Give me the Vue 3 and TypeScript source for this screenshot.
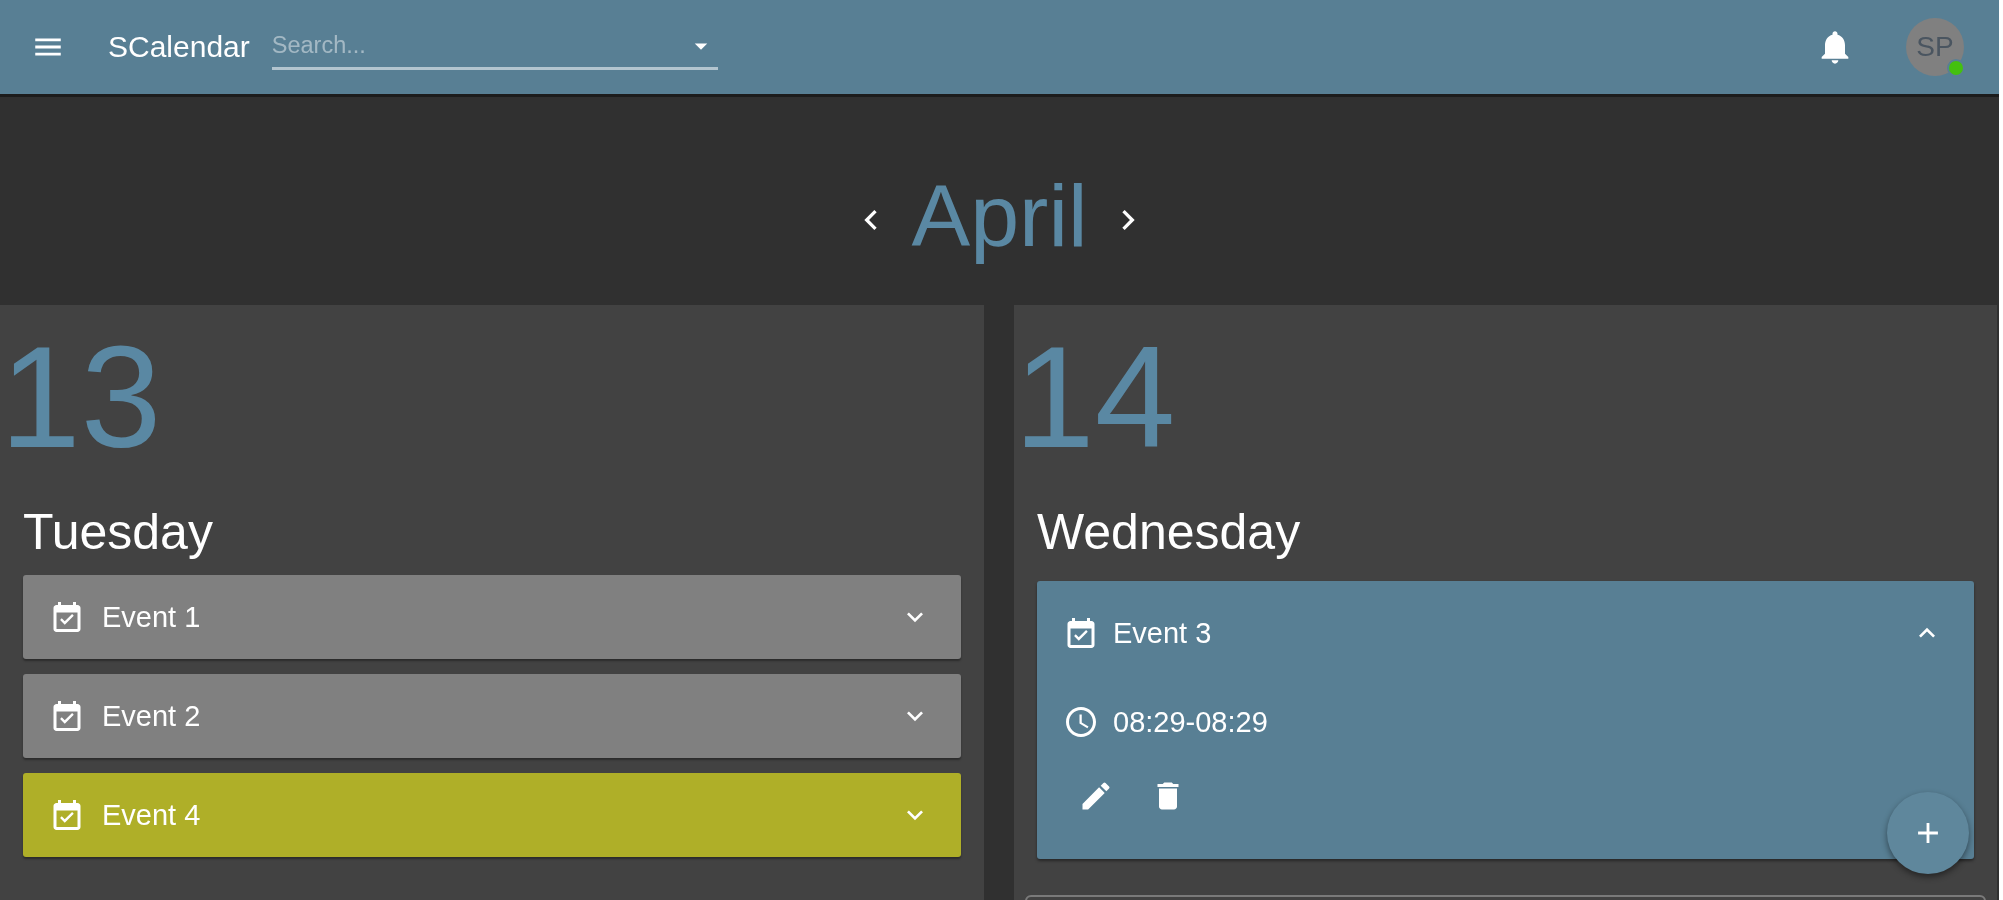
<script setup lang="ts">
interface Item { name: string; tone: string }
const tuesday: Item[] = [
  { name: 'Event 1', tone: 'grey' },
  { name: 'Event 2', tone: 'grey' },
  { name: 'Event 4', tone: 'olive' },
]
const calendar = 'M19 4h-1V2h-2v2H8V2H6v2H5C3.9 4 3 4.9 3 6v14c0 1.1.9 2 2 2h14c1.1 0 2-.9 2-2V6c0-1.1-.9-2-2-2zm0 16H5V9h14v11zm-2.5-8.9-1.1-1.1-4.9 4.9-2-2-1.1 1.1 3.1 3.1z'
const down = 'M7.41 8.59 12 13.17l4.59-4.58L18 10l-6 6-6-6z'
</script>

<template>
  <div class="page">
    <header class="topbar">
      <svg class="menu" viewBox="0 0 24 24"><path d="M3 18h18v-2H3v2zm0-5h18v-2H3v2zm0-7v2h18V6H3z" /></svg>
      <span class="brand">SCalendar</span>
      <div class="search">
        <span class="placeholder">Search...</span>
        <svg class="caret" viewBox="0 0 24 24"><path d="M7 10l5 5 5-5z" /></svg>
      </div>
      <div class="spacer"></div>
      <svg class="bell" viewBox="0 0 24 24"><path d="M12 22c1.1 0 2-.9 2-2h-4c0 1.1.9 2 2 2zm6-6v-5c0-3.07-1.63-5.64-4.5-6.32V4c0-.83-.67-1.5-1.5-1.5s-1.5.67-1.5 1.5v.68C7.64 5.36 6 7.92 6 11v5l-2 2v1h16v-1l-2-2z" /></svg>
      <div class="avatar">SP<span class="dot"></span></div>
    </header>

    <div class="month">
      <svg class="nav" viewBox="0 0 24 24"><path d="M15.41 7.41 14 6l-6 6 6 6 1.41-1.41L10.83 12z" /></svg>
      <span class="month-name">April</span>
      <svg class="nav" viewBox="0 0 24 24"><path d="M8.59 16.59 10 18l6-6-6-6-1.41 1.41L13.17 12z" /></svg>
    </div>

    <main class="days">
      <section class="day">
        <div class="num">13</div>
        <h2 class="weekday">Tuesday</h2>
        <div class="list">
          <div v-for="item in tuesday" :key="item.name" class="row" :class="item.tone">
            <svg class="ico" viewBox="0 0 24 24"><path :d="calendar" /></svg>
            <span>{{ item.name }}</span>
            <svg class="chev" viewBox="0 0 24 24"><path :d="down" /></svg>
          </div>
        </div>
      </section>

      <section class="day second">
        <div class="num">14</div>
        <h2 class="weekday">Wednesday</h2>
        <div class="open">
          <div class="open-head">
            <svg class="ico" viewBox="0 0 24 24"><path :d="calendar" /></svg>
            <span>Event 3</span>
            <svg class="chev" viewBox="0 0 24 24"><path d="M12 8l-6 6 1.41 1.41L12 10.83l4.59 4.58L18 14z" /></svg>
          </div>
          <div class="open-time">
            <svg class="ico" viewBox="0 0 24 24"><path d="M11.99 2C6.47 2 2 6.48 2 12s4.47 10 9.99 10C17.52 22 22 17.52 22 12S17.52 2 11.99 2zM12 20c-4.42 0-8-3.58-8-8s3.58-8 8-8 8 3.58 8 8-3.58 8-8 8zm.5-13H11v6l5.25 3.15.75-1.23-4.5-2.67z" /></svg>
            <span>08:29-08:29</span>
          </div>
          <div class="open-actions">
            <svg class="act" viewBox="0 0 24 24"><path d="M3 17.25V21h3.75L17.81 9.94l-3.75-3.75L3 17.25zM20.71 7.04a1 1 0 0 0 0-1.41l-2.34-2.34a1 1 0 0 0-1.41 0l-1.83 1.83 3.75 3.75 1.83-1.83z" /></svg>
            <svg class="act" viewBox="0 0 24 24"><path d="M6 19c0 1.1.9 2 2 2h8c1.1 0 2-.9 2-2V7H6v12zM19 4h-3.5l-1-1h-5l-1 1H5v2h14V4z" /></svg>
          </div>
        </div>
        <div class="outlined"></div>
      </section>
    </main>

    <button class="fab" type="button" aria-label="Add">
      <svg viewBox="0 0 24 24"><path d="M19 13h-6v6h-2v-6H5v-2h6V5h2v6h6v2z" /></svg>
    </button>
  </div>
</template>

<style>
html, body { margin: 0; background: #fff; overflow: hidden; }
</style>

<style scoped>
.page {
  position: relative;
  width: 1999px;
  height: 900px;
  overflow: hidden;
  background: #303030;
  font-family: "Liberation Sans", Arial, sans-serif;
  color: #fff;
  filter: blur(0.6px);
}
svg { fill: currentColor; display: block; flex: none; }
.topbar {
  height: 94px;
  box-sizing: border-box;
  border-bottom: 0;
  box-shadow: 0 3px 0 #1c1c1c;
  background: #587f94;
  display: flex;
  align-items: center;
  padding-left: 32px;
  position: relative;
}
.menu { width: 34px; height: 34px; margin-left: -1px; }
.brand { font-size: 30px; margin-left: 43px; }
.search {
  width: 446px;
  height: 46px;
  margin-left: 22px;
  box-sizing: border-box;
  border-bottom: 3px solid rgba(255, 255, 255, 0.55);
  display: flex;
  align-items: center;
  justify-content: space-between;
  margin-top: 0;
  padding-right: 2px;
}
.placeholder { font-size: 23.5px; color: rgba(255, 255, 255, 0.45); }
.caret { width: 30px; height: 30px; }
.spacer { flex: 1; }
.bell { width: 40px; height: 40px; margin-right: 51px; }
.avatar {
  position: relative;
  width: 58px;
  height: 58px;
  margin-right: 35px;
  border-radius: 50%;
  background: #808080;
  color: #4a5560;
  font-size: 28px;
  display: flex;
  align-items: center;
  justify-content: center;
}
.dot {
  position: absolute;
  right: -1px;
  bottom: -1px;
  width: 14px;
  height: 14px;
  border-radius: 50%;
  background: #44c00f;
  border: 2px solid #587f94;
}
.month {
  height: 211px;
  box-sizing: border-box;
  padding-top: 33px;
  display: flex;
  align-items: center;
  justify-content: center;
  gap: 20px;
}
.month-name { font-size: 88px; color: #5a88a3; line-height: 1; }
.nav { width: 40px; height: 40px; margin-top: 8px; }
.days {
  display: grid;
  grid-template-columns: 984px 983px;
  column-gap: 30px;
  height: 595px;
}
.day {
  background: #424242;
  padding: 0 23px;
  box-sizing: border-box;
  height: 595px;
  overflow: hidden;
}
.num {
  font-size: 145px;
  line-height: 1;
  color: #5a88a3;
  margin: 20px 0 0 -23px;
  height: 146px;
}
.second .num { margin-left: -23px; }
.weekday {
  font-size: 50px;
  font-weight: 400;
  line-height: 58px;
  margin: 32px 0 0;
  letter-spacing: 0;
}
.list { display: flex; flex-direction: column; gap: 15px; margin-top: 14px; }
.row {
  height: 84px;
  border-radius: 3px;
  box-shadow: 0 2px 2px rgba(0, 0, 0, 0.35);
  display: flex;
  align-items: center;
  padding: 0 30px 0 26px;
  font-size: 29px;
}
.row span { margin-left: 17px; }
.grey { background: #808080; }
.olive { background: #afaf28; }
.ico { width: 36px; height: 36px; }
.chev { width: 32px; height: 32px; margin-left: auto; }
.open {
  margin-top: 20px;
  height: 278px;
  background: #587f94;
  border-radius: 3px;
  box-shadow: 0 2px 3px rgba(0, 0, 0, 0.4);
  box-sizing: border-box;
  padding: 34px 26px 0;
  font-size: 29px;
}
.open-head, .open-time { display: flex; align-items: center; }
.open-head span, .open-time span { margin-left: 14px; }
.open-head { height: 36px; padding-right: 5px; }
.open-time { margin-top: 53px; height: 36px; }
.open-actions { display: flex; gap: 36px; margin-top: 38px; padding-left: 15px; }
.act { width: 36px; height: 36px; }
.second { padding: 0 23px; }
.outlined {
  margin: 36px -12px 0;
  height: 60px;
  border: 2px solid #7a7a7a;
  border-radius: 6px;
}
.fab {
  position: absolute;
  left: 1887px;
  top: 792px;
  width: 82px;
  height: 82px;
  padding: 0;
  border: 0;
  border-radius: 50%;
  background: #5f879c;
  color: #fff;
  box-shadow: 0 3px 6px rgba(0, 0, 0, 0.45);
  display: flex;
  align-items: center;
  justify-content: center;
}
.fab svg { width: 34px; height: 34px; }
</style>
